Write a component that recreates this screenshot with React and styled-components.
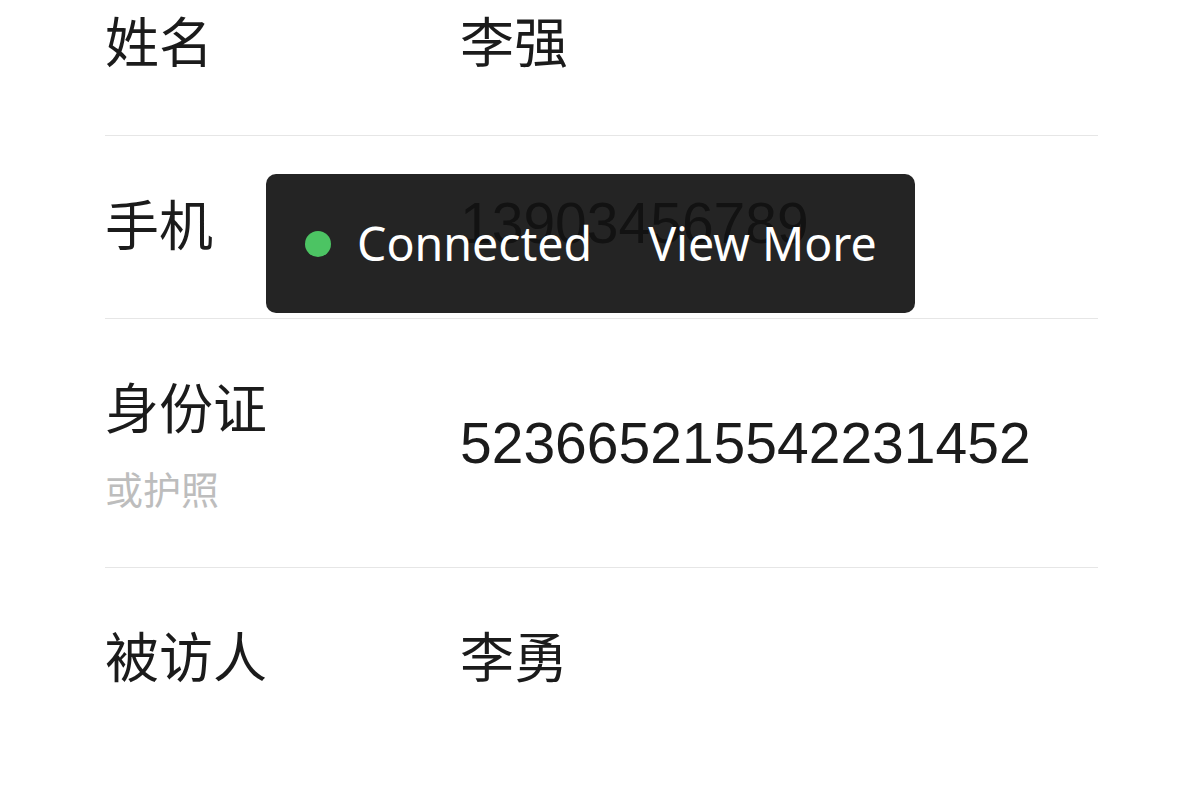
import styled, {createGlobalStyle} from 'styled-components'

const GlobalStyle = createGlobalStyle`
  html, body {
    margin: 0;
    padding: 0;
    background: #ffffff;
    overflow: hidden;
  }
  body {
    font-family: "Noto Sans CJK SC", "Noto Sans", sans-serif;
    color: #1b1b1b;
  }
`

const Page = styled.div`
  position: relative;
  width: 1200px;
  height: 800px;
  overflow: hidden;
`

// the list is scrolled a little, so the first row is cut at the top
const List = styled.div`
  margin: -47px 102px 0 105px;
  display: flex;
  flex-direction: column;
`

const Row = styled.div`
  display: flex;
  align-items: center;
  padding: ${props => props.tall ? '56px 0' : '56px 0 64px'};
  border-bottom: ${props => props.last ? 'none' : '1px solid #e6e6e6'};
`

const LabelCol = styled.div`
  width: 355px;
  flex-shrink: 0;
  display: flex;
  flex-direction: column;
  gap: 28px;
`

const Label = styled.div`
  font-size: 54px;
  line-height: 62px;
  color: #1b1b1b;
`

const SubLabel = styled.div`
  font-size: 38px;
  line-height: 46px;
  color: #bdbdbd;
`

const Value = styled.div`
  font-family: ${props => props.digits ? '"Liberation Sans", Arial' : '"Noto Sans CJK SC"'}, sans-serif;
  font-size: ${props => props.digits ? '57px' : '54px'};
  line-height: 62px;
  color: #1b1b1b;
`

const Toast = styled.div`
  position: absolute;
  left: 266px;
  top: 174px;
  width: 649px;
  height: 139px;
  box-sizing: border-box;
  border-radius: 10px;
  background: rgba(17, 17, 17, 0.92);
  display: flex;
  align-items: center;
  padding-left: 39px;
  font-family: "Noto Sans", "Open Sans", sans-serif;
  font-size: 46.5px;
  color: #ffffff;
`

const Dot = styled.span`
  width: 26px;
  height: 26px;
  border-radius: 50%;
  background: #4cc463;
  margin-right: 26px;
  flex-shrink: 0;
`

const ToastText = styled.span`
  margin-right: ${props => props.gap || 0}px;
  line-height: 1;
  white-space: nowrap;
`

const rows = [
    {label: '姓名', value: '李强'},
    {label: '手机', value: '13903456789', digits: true},
    {label: '身份证', sub: '或护照', value: '523665215542231452', digits: true, tall: true},
    {label: '被访人', value: '李勇', last: true},
]

const App = () => {
    return (
        <Page>
            <GlobalStyle/>
            <List>
                {rows.map(r => (
                    <Row key={r.label} tall={r.tall} last={r.last}>
                        <LabelCol>
                            <Label>{r.label}</Label>
                            {r.sub && <SubLabel>{r.sub}</SubLabel>}
                        </LabelCol>
                        <Value digits={r.digits}>{r.value}</Value>
                    </Row>
                ))}
            </List>

            <Toast>
                <Dot/>
                <ToastText gap={56}>Connected</ToastText>
                <ToastText>View More</ToastText>
            </Toast>
        </Page>
    )
}

export default App
